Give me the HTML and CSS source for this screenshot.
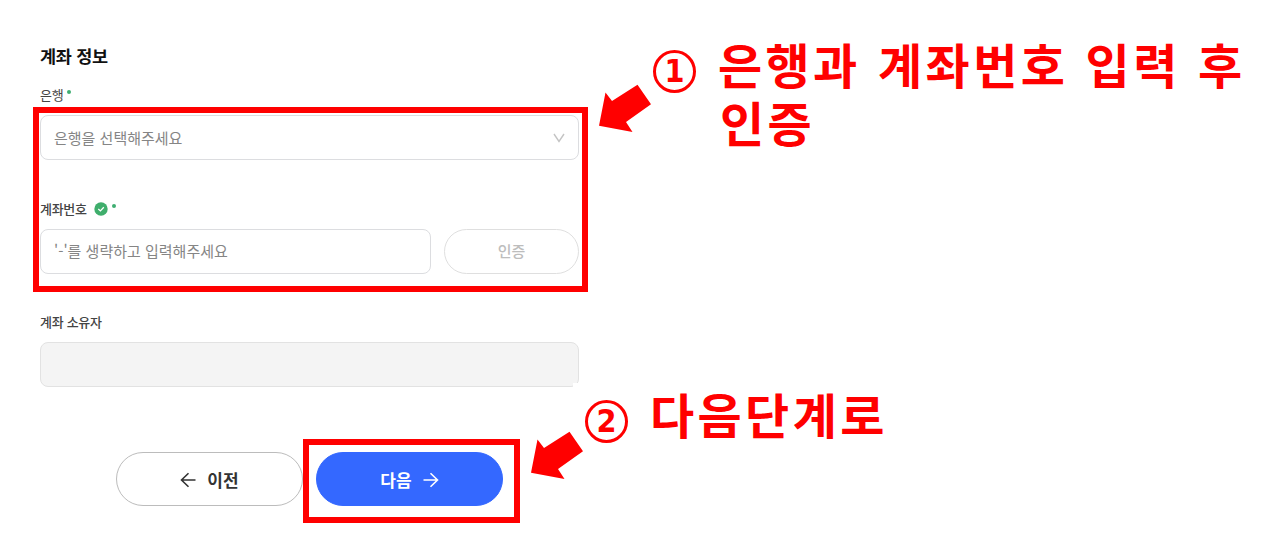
FILE: index.html
```html
<!DOCTYPE html>
<html lang="ko">
<head>
    <meta charset="UTF-8">
    <meta name="viewport" content="width=device-width, initial-scale=1.0">
    <title>계좌 정보</title>
    <link rel="stylesheet" href="styles.css">
</head>
<body>

    <main class="account-form">
        <h2 class="title">계좌 정보</h2>

        <!-- Bank -->
        <div class="field">
            <div class="label label-light">은행<span class="required"></span></div>
            <div class="select">
                <span>은행을 선택해주세요</span>
                <svg class="chevron" width="12" height="10" viewBox="0 0 12 10">
                    <path d="M1 1 L6 8.5 L11 1"/>
                </svg>
            </div>
        </div>

        <!-- Account number -->
        <div class="field field-number">
            <div class="label">계좌번호
                <svg class="check" width="14" height="14" viewBox="0 0 14 14">
                    <circle cx="7" cy="7" r="6.7"/>
                    <path d="M4.3 7 L6.4 8.9 L9.8 5.2"/>
                </svg>
                <span class="required"></span>
            </div>
            <div class="row">
                <div class="input account-number">'-'를 생략하고 입력해주세요</div>
                <button class="verify">인증</button>
            </div>
        </div>

        <!-- Owner -->
        <div class="field">
            <div class="label">계좌 소유자</div>
            <div class="input disabled"></div>
        </div>

        <div class="buttons">
            <button class="nav-button prev">
                <svg width="16" height="16" viewBox="0 0 16 16"><path d="M15.5 8 H1.5 M8.5 1.2 L1.5 8 L8.5 14.8"/></svg>
                <span>이전</span>
            </button>
            <button class="nav-button next">
                <span>다음</span>
                <svg width="16" height="16" viewBox="0 0 16 16"><path d="M0.5 8 H14.5 M7.5 1.2 L14.5 8 L7.5 14.8"/></svg>
            </button>
        </div>
    </main>

    <!-- Guide marks over the form -->
    <div class="mark mark-account"></div>
    <div class="mark mark-next"></div>

    <svg class="arrow arrow-account" width="54" height="50" viewBox="0 0 54 50">
        <polygon points="1,41.7 7.5,8.5 14,17 39.5,0.7 53,20.3 28,38 34.5,48"/>
    </svg>
    <svg class="arrow arrow-next" width="54" height="50" viewBox="0 0 54 50">
        <polygon points="1,41.7 7.5,8.5 14,17 39.5,0.7 53,20.3 28,38 34.5,48"/>
    </svg>

    <div class="step step-account">
        <span class="number">1</span>
        <div>
            <p>은행과 계좌번호 입력 후</p>
            <p class="second-line">인증</p>
        </div>
    </div>
    <div class="step step-next">
        <span class="number">2</span>
        <p>다음단계로</p>
    </div>

</body>
</html>
```
FILE: styles.css
```css
* {
    margin: 0;
    padding: 0;
    box-sizing: border-box;
}

body {
    position: relative;
    height: 560px;
    overflow: hidden;
    background-color: #fff;
    font-family: "Noto Sans CJK KR", sans-serif;
}

/* Form */
.account-form {
    width: 579px;
    padding: 43px 0 0 40px;
}

.title {
    height: 26px;
    margin-bottom: 16px;
    font-size: 17.5px;
    line-height: 26px;
    letter-spacing: -0.3px;
    color: #111;
}

.field {
    margin-bottom: 39px;
}

.field-number {
    margin-bottom: 38px;
}

.label {
    display: flex;
    align-items: center;
    height: 18px;
    margin-bottom: 12px;
    font-size: 13px;
    font-weight: 500;
    letter-spacing: -0.3px;
    color: #444;
}

.label-light {
    font-weight: 400;
}

.required {
    width: 4px;
    height: 4px;
    margin: 0 0 5px 4px;
    border-radius: 50%;
    background-color: #3fae72;
}

.check {
    margin: 2px 0 0 7px;
}

.check circle {
    fill: #3fae6c;
}

.check path {
    fill: none;
    stroke: #fff;
    stroke-width: 1.3;
}

.select,
.input {
    display: flex;
    align-items: center;
    justify-content: space-between;
    height: 45px;
    padding: 0 13px;
    border: 1px solid #dcdde0;
    border-radius: 8px;
    font-size: 15px;
    color: #858585;
}

.input {
    padding-bottom: 2px;
}

.chevron {
    fill: none;
    stroke: #c4c4c4;
    stroke-width: 1.4;
}

.row {
    display: flex;
    gap: 13px;
}

.account-number {
    flex: 1;
}

.verify {
    width: 135px;
    height: 45px;
    padding-bottom: 2px;
    border: 1px solid #dfdfdf;
    border-radius: 23px;
    background-color: #fff;
    font-family: inherit;
    font-size: 15px;
    font-weight: 500;
    color: #bdbdbd;
}

.disabled {
    position: relative;
    border-color: #e2e2e2;
    background-color: #f4f4f4;
}

.disabled::after {
    content: "";
    position: absolute;
    right: -1px;
    bottom: -1px;
    width: 6px;
    height: 4px;
    background-color: #fff;
}

.buttons {
    display: flex;
    gap: 13px;
    margin: 65px 0 0 76px;
}

.nav-button {
    display: flex;
    align-items: center;
    justify-content: center;
    gap: 11px;
    width: 187px;
    height: 54px;
    border: 1px solid #bcbcbc;
    border-radius: 27px;
    background-color: #fff;
    font-family: inherit;
    font-size: 17px;
    font-weight: 700;
    color: #333;
}

.nav-button svg {
    margin-top: 2px;
    fill: none;
    stroke: currentColor;
    stroke-width: 1.6;
}

.next {
    border-color: #3468ff;
    background-color: #3468ff;
    color: #fff;
}

/* Guide marks */
.mark {
    position: absolute;
    border: 6px solid #f00;
}

.mark-account {
    top: 107px;
    left: 33px;
    width: 555px;
    height: 185px;
}

.mark-next {
    top: 439px;
    left: 303px;
    width: 217px;
    height: 84px;
}

.arrow {
    position: absolute;
    fill: #f00;
}

.arrow-account {
    top: 84px;
    left: 598px;
}

.arrow-next {
    top: 431px;
    left: 530px;
}

.step {
    position: absolute;
    display: flex;
    gap: 22px;
    font-size: 48px;
    font-weight: 700;
    line-height: 58px;
    letter-spacing: 3.4px;
    word-spacing: 0.5px;
    white-space: nowrap;
    color: #f00;
}

.second-line {
    padding-left: 2px;
}

.step-account {
    top: 34px;
    left: 653px;
}

.step-next {
    top: 384px;
    left: 585px;
}

.number {
    width: 43px;
    height: 43px;
    margin-top: 16px;
    border: 3px solid #f00;
    border-radius: 50%;
    font-family: "DejaVu Sans Condensed", "DejaVu Sans", sans-serif;
    font-size: 32px;
    line-height: 37px;
    letter-spacing: 0;
    text-align: center;
}
```
